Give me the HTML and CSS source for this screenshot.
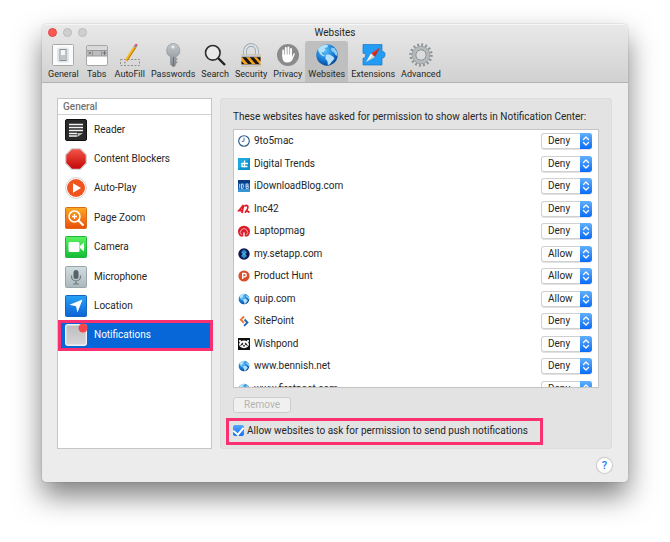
FILE: index.html
```html
<!DOCTYPE html>
<html lang="en">
<head>
    <meta charset="UTF-8">
    <meta name="viewport" content="width=device-width, initial-scale=1.0">
    <title>Websites</title>
    <link rel="stylesheet" href="styles.css">
</head>
<body>
    <!-- Shared shapes -->
    <svg class="defs" aria-hidden="true">
        <defs>
            <radialGradient id="sea" cx=".4" cy=".3" r=".75">
                <stop offset="0" stop-color="#5cc4fa"/>
                <stop offset=".6" stop-color="#1478d4"/>
                <stop offset="1" stop-color="#083f8c"/>
            </radialGradient>
            <linearGradient id="metal" x1="0" y1="0" x2="0" y2="1">
                <stop offset="0" stop-color="#c3c9cd"/>
                <stop offset="1" stop-color="#82898e"/>
            </linearGradient>
            <linearGradient id="red" x1="0" y1="0" x2="0" y2="1">
                <stop offset="0" stop-color="#f4564a"/>
                <stop offset="1" stop-color="#c40505"/>
            </linearGradient>
            <linearGradient id="orange" x1="0" y1="0" x2="0" y2="1">
                <stop offset="0" stop-color="#fbab22"/>
                <stop offset="1" stop-color="#ea4c0c"/>
            </linearGradient>
            <linearGradient id="green" x1="0" y1="0" x2="0" y2="1">
                <stop offset="0" stop-color="#5df25f"/>
                <stop offset="1" stop-color="#12bd35"/>
            </linearGradient>
            <linearGradient id="blue" x1="0" y1="0" x2="0" y2="1">
                <stop offset="0" stop-color="#27a3f8"/>
                <stop offset="1" stop-color="#0e62d6"/>
            </linearGradient>
            <linearGradient id="silver" x1="0" y1="0" x2="0" y2="1">
                <stop offset="0" stop-color="#d2dde0"/>
                <stop offset="1" stop-color="#aab8bd"/>
            </linearGradient>
            <linearGradient id="grey" x1="0" y1="0" x2="0" y2="1">
                <stop offset="0" stop-color="#bdbdbf"/>
                <stop offset="1" stop-color="#d6d6d8"/>
            </linearGradient>
        </defs>
        <symbol id="globe" viewBox="0 0 24 24">
            <circle cx="12" cy="12" r="10.7" fill="url(#sea)"/>
            <path d="M3 6C5 3 8 1.600 11 1.400L13.500 2.500 12 4.500 9.500 5 10.500 7 8.500 9 6.500 9.500 7.500 11.500 10 12.500 8.500 13.500 5.500 11.500 3.500 8.500Z" fill="#b5e2f9"/>
            <path d="M11 11.500L14.500 11.500 18 13.500 19.500 15.500 17 18.500 14.500 21.500 12.800 22 12.500 18.500 10.300 15.500Z" fill="#b5e2f9"/>
            <path d="M16 4.500L19.500 5.200 22 9 22.500 13 20.500 12 19 9.500 16.500 8Z" fill="#8fcff5"/>
        </symbol>
        <symbol id="arrows" viewBox="0 0 12 16">
            <path d="M3.500 6.500L6 4 8.500 6.500M3.500 9.500L6 12 8.500 9.500" fill="none" stroke="#fff" stroke-width="1.300" stroke-linecap="round" stroke-linejoin="round"/>
        </symbol>
    </svg>

    <div class="window">
        <header class="header">
            <div class="titlebar">
                <div class="lights">
                    <button class="light close" aria-label="Close"></button>
                    <button class="light" aria-label="Minimize" disabled></button>
                    <button class="light" aria-label="Zoom" disabled></button>
                </div>
                <h1>Websites</h1>
            </div>
            <nav class="toolbar">
                <button class="tool">
                    <svg viewBox="0 0 24 24"><rect x="1.500" y="1.500" width="21" height="21" rx="1" fill="#fbfbfb" stroke="#a9a9a9"/><rect x="6" y="4.500" width="12" height="15" rx="2.500" fill="#e2e5e7"/><rect x="9" y="6.500" width="6" height="11" fill="#f5f5f5" stroke="#8b8f92"/><path d="M10 12h4v5h-4z" fill="#c3c6c8"/></svg>
                    General
                </button>
                <button class="tool">
                    <svg viewBox="0 0 24 24"><rect x="1.500" y="2.500" width="21" height="20" rx="1.500" fill="#fff" stroke="#a6a6a6"/><path d="M2 3h20v4H2z" fill="#d9d9d9"/><path d="M2 7h20v6H2z" fill="#bcbcbe"/><path d="M2 7.500h20M2 13h20M7.500 8v5M16.500 8v5" stroke="#99999b"/><path d="M3.500 8.800l2.500 2.500M6 8.800l-2.500 2.500M19.500 8v4M17.500 10h4" stroke="#626265" stroke-width=".8"/></svg>
                    Tabs
                </button>
                <button class="tool">
                    <svg viewBox="0 0 24 24"><path d="M2.500 16.500h19v6h-19z" fill="none" stroke="#909090" stroke-dasharray="2 1.500"/><path d="M6.500 20.500L7.300 16.500 9.500 18Z" fill="#e9c79d"/><path d="M7.300 16.500L15.500 3.500 18 5 9.500 18Z" fill="#f7b614"/><path d="M8.700 17.500L17.200 4.600 18 5 9.500 18Z" fill="#bb790b"/><path d="M15.500 3.500L16.500 2 19 3.500 18 5Z" fill="#8e8994"/><path d="M16.500 2Q18 .2 19.200 1.200 20.200 2 19 3.500Z" fill="#dd5173"/><path d="M6.500 20.500L6.700 19 7.600 19.600Z" fill="#222"/></svg>
                    AutoFill
                </button>
                <button class="tool">
                    <svg viewBox="0 0 24 24"><path d="M12 .5a7 7 0 0 1 3 13.200V21l-1.500 2.500h-1.800L9.500 21.500v-7.800A7 7 0 0 1 12 .5z" fill="url(#metal)" stroke="#858b90" stroke-width=".6"/><path d="M12.500 14v9" stroke="#656d72" stroke-width="1"/><path d="M15 15.500h1.500v1.500H15zM15 18.500h1.500V20H15z" fill="#8f979b"/><circle cx="12" cy="4" r="1.500" fill="#eef1f2"/></svg>
                    Passwords
                </button>
                <button class="tool">
                    <svg viewBox="0 0 24 24"><circle cx="9.800" cy="9.800" r="7.300" fill="#f1f1f1" fill-opacity=".6" stroke="#2e2e2e" stroke-width="1.600"/><path d="M15 15l7 7" stroke="#202020" stroke-width="2.400"/></svg>
                    Search
                </button>
                <button class="tool">
                    <svg viewBox="0 0 24 24"><path d="M6 13V8a6 6 0 0 1 12 0v5" fill="none" stroke="#8795a3" stroke-width="3.400"/><path d="M6 13V8a6 6 0 0 1 12 0v5" fill="none" stroke="#dce3e9" stroke-width="2.200"/><rect x="2.500" y="11.500" width="19" height="12" fill="#f7a21c"/><path d="M3 14h4l6 7H9zM10.500 14h4l6 7h-4zM17.500 14h4v4.500zM2.500 18l2.800 3H2.500z" fill="#191614"/><path d="M2.500 11.500h19v2.500h-19zM2.500 21.500h19v2h-19z" fill="#c5ced8"/><path d="M2.500 14h19M2.500 21.500h19" stroke="#70767b" stroke-width=".6"/></svg>
                    Security
                </button>
                <button class="tool">
                    <svg viewBox="0 0 24 24"><circle cx="12" cy="12" r="11" fill="#8b8b8b"/><path d="M7.200 13V7.500M9.800 12V5M12.400 12V4.500M15 12V6" stroke="#fff" stroke-width="1.900" stroke-linecap="round"/><path d="M6.300 11.500h9.600v2.700L17.500 10.500Q18.800 9.800 18.900 11L16.500 16.500Q15 19.500 11.500 19.500 6.300 19.500 6.300 14z" fill="#fff"/></svg>
                    Privacy
                </button>
                <button class="tool active">
                    <svg><use href="#globe"/></svg>
                    Websites
                </button>
                <button class="tool">
                    <svg viewBox="0 0 24 24"><path d="M2 1.500h19v7.300c1.500-1 3.500.8 3 3.200-.2 2.500-1.700 3.500-3 2.700V22H2v-7c3 1.200 3.700-5.600 0-4.700z" fill="#239df4" stroke="#1576ca" stroke-width=".7"/><path d="M19 4.500L10 10.500l4 3.500z" fill="#ec3325"/><path d="M5 19L10 10.500l4 3.500z" fill="#fff"/><path d="M5 19l14-14.500L14 14z" fill="#000" fill-opacity=".16"/></svg>
                    Extensions
                </button>
                <button class="tool">
                    <svg viewBox="0 0 24 24"><circle cx="12" cy="12" r="10.300" fill="none" stroke="#8c9194" stroke-width="2.800" stroke-dasharray="1.800 2.245"/><circle cx="12" cy="12" r="7.200" fill="none" stroke="#b5babd" stroke-width="3.400"/><circle cx="12" cy="12" r="8.900" fill="none" stroke="#8f9598" stroke-width=".7"/><circle cx="12" cy="12" r="5.200" fill="#dcdcdc" stroke="#868c90" stroke-width="1"/></svg>
                    Advanced
                </button>
            </nav>
        </header>

        <main class="content">
            <aside class="sidebar">
                <h2>General</h2>
                <ul class="categories">
                    <li><a href="#">
                        <svg viewBox="0 0 22 22"><rect x=".5" y=".5" width="21" height="21" rx="1.500" fill="#292929" stroke="#101010"/><path d="M4 5.500h14M4 8.500h14M4 11.500h14M4 14.500h8M4 17h8" stroke="#f3f3f3" stroke-width="1.600"/><path d="M12.500 18v-4H18z" fill="#bbb"/></svg>
                        Reader</a></li>
                    <li><a href="#">
                        <svg viewBox="0 0 22 22"><path d="M6.800.7h8.400l6.100 6.100v8.400l-6.100 6.100H6.800L.7 15.200V6.800z" fill="url(#red)" stroke="#d4d4d4" stroke-width="1.200"/></svg>
                        Content Blockers</a></li>
                    <li><a href="#">
                        <svg viewBox="0 0 22 22"><circle cx="11" cy="11" r="10.400" fill="#fff" stroke="#cbcbcb" stroke-width=".9"/><circle cx="11" cy="11" r="9" fill="#f0551f"/><path d="M8 6.300l8 4.700-8 4.700z" fill="#fff"/></svg>
                        Auto-Play</a></li>
                    <li><a href="#">
                        <svg viewBox="0 0 22 22"><rect x=".5" y=".5" width="21" height="21" rx="1" fill="url(#orange)" stroke="#dc6d13"/><circle cx="9.500" cy="9.500" r="5.500" fill="none" stroke="#fff" stroke-width="1.500"/><path d="M7 9.500h5M9.500 7v5" stroke="#fff" stroke-width="1.300"/><path d="M13.500 13.500l5 5" stroke="#fff" stroke-width="2.200"/></svg>
                        Page Zoom</a></li>
                    <li><a href="#">
                        <svg viewBox="0 0 22 22"><rect x=".5" y=".5" width="21" height="21" rx="1" fill="url(#green)" stroke="#20b63c"/><rect x="3.500" y="6" width="11" height="10" rx="1.500" fill="#fff"/><path d="M15 10l4-3.500v9L15 12z" fill="#fff"/></svg>
                        Camera</a></li>
                    <li><a href="#">
                        <svg viewBox="0 0 22 22"><rect x=".5" y=".5" width="21" height="21" rx="1" fill="url(#silver)" stroke="#98a6ab"/><rect x="8.500" y="4" width="5" height="9" rx="2.500" fill="#596267"/><path d="M6.500 9.500v1a4.500 4.500 0 0 0 9 0v-1M11 15v2.500M8 18h6" fill="none" stroke="#6d777c" stroke-width="1.200"/></svg>
                        Microphone</a></li>
                    <li><a href="#">
                        <svg viewBox="0 0 22 22"><rect x=".5" y=".5" width="21" height="21" rx="1" fill="url(#blue)" stroke="#1466bd"/><path d="M17.500 4.500L12.500 17.500 11 11.200 4.500 9.700z" fill="#fff"/></svg>
                        Location</a></li>
                    <li class="selected"><a href="#" aria-current="page">
                        <svg viewBox="0 0 22 22"><rect x=".7" y=".7" width="20.600" height="20.600" rx="2" fill="url(#grey)" stroke="#f1f1f1" stroke-width="1.400"/><circle cx="18" cy="4" r="4.500" fill="#f8454a"/></svg>
                        Notifications</a></li>
                </ul>
            </aside>

            <section class="panel">
                <p class="intro">These websites have asked for permission to show alerts in Notification Center:</p>
                <div class="list">
                    <table class="sites">
                        <tbody>
                            <tr>
                                <td><svg viewBox="0 0 12 12"><circle cx="6" cy="6" r="5.300" fill="#fff" stroke="#245383" stroke-width="1.100"/><path d="M6 2.700V6.300H3.700" fill="none" stroke="#245383" stroke-width=".8"/></svg><label for="s1">9to5mac</label></td>
                                <td><span class="popup"><select id="s1"><option>Deny</option><option>Allow</option></select><svg><use href="#arrows"/></svg></span></td>
                            </tr>
                            <tr>
                                <td><svg viewBox="0 0 12 12"><path d="M0 0h12v12H0z" fill="#0c91cf"/><path d="M0 0h12L0 12z" fill="#1ca9df"/><path d="M6.500 2.500v7M3.500 5.500h6.500M4 5v3.500h5.500" fill="none" stroke="#fff" stroke-width="1.300"/></svg><label for="s2">Digital Trends</label></td>
                                <td><span class="popup"><select id="s2"><option>Deny</option><option>Allow</option></select><svg><use href="#arrows"/></svg></span></td>
                            </tr>
                            <tr>
                                <td><svg viewBox="0 0 12 12"><path d="M0 0h12v12H0z" fill="#1656a5"/><path d="M0 0h12v3H0z" fill="#0b3b81"/><path d="M0 9h12v3H0z" fill="#3a94d0"/><path d="M1.700 4v4.500M3.500 4v4.500h1.300q1.500-2.200 0-4.500zM8 4v4.500h2.300V6.300H8h2V4z" fill="none" stroke="#c5e0f5" stroke-width=".9"/></svg><label for="s3">iDownloadBlog.com</label></td>
                                <td><span class="popup"><select id="s3"><option>Deny</option><option>Allow</option></select><svg><use href="#arrows"/></svg></span></td>
                            </tr>
                            <tr>
                                <td><svg viewBox="0 0 12 12"><path d="M5.500 2L1 7.500h4M5.500 2L4 10M6.500 3.500Q8 1.500 9.500 3T7 9.800M8.500 7.500l3 2" fill="none" stroke="#e21d29" stroke-width="1.800"/></svg><label for="s4">Inc42</label></td>
                                <td><span class="popup"><select id="s4"><option>Deny</option><option>Allow</option></select><svg><use href="#arrows"/></svg></span></td>
                            </tr>
                            <tr>
                                <td><svg viewBox="0 0 12 12"><path d="M2.500 11.500A6 6 0 1 1 9.500 11.500z" fill="#dc1e2b"/><path d="M3.600 10A3.600 3.600 0 1 1 8.400 10" fill="none" stroke="#fff" stroke-width=".6"/><path d="M5.300 7.500h1.400V12H5.300z" fill="#fff"/></svg><label for="s5">Laptopmag</label></td>
                                <td><span class="popup"><select id="s5"><option>Deny</option><option>Allow</option></select><svg><use href="#arrows"/></svg></span></td>
                            </tr>
                            <tr>
                                <td><svg viewBox="0 0 12 12"><circle cx="6" cy="6" r="5.700" fill="#111653"/><path d="M6 1.500L9 4 7.500 6 9 8 6 10.500 3 8 4.500 6 3 4z" fill="#278ec5"/><path d="M4.500 4.500l3 3M7.500 4.500l-3 3" stroke="#62c4e0" stroke-width=".7"/></svg><label for="s6">my.setapp.com</label></td>
                                <td><span class="popup"><select id="s6"><option>Allow</option><option>Deny</option></select><svg><use href="#arrows"/></svg></span></td>
                            </tr>
                            <tr>
                                <td><svg viewBox="0 0 12 12"><circle cx="6" cy="6" r="5.600" fill="#da4e2b"/><path d="M4.700 9V3.500h1.900a1.600 1.600 0 0 1 0 3.300H4.700" fill="none" stroke="#fff" stroke-width="1.300"/></svg><label for="s7">Product Hunt</label></td>
                                <td><span class="popup"><select id="s7"><option>Allow</option><option>Deny</option></select><svg><use href="#arrows"/></svg></span></td>
                            </tr>
                            <tr>
                                <td><svg><use href="#globe"/></svg><label for="s8">quip.com</label></td>
                                <td><span class="popup"><select id="s8"><option>Allow</option><option>Deny</option></select><svg><use href="#arrows"/></svg></span></td>
                            </tr>
                            <tr>
                                <td><svg viewBox="0 0 12 12"><path d="M6 1.500L2.800 4.700 6 7.800" fill="none" stroke="#f36f21" stroke-width="1.800"/><path d="M6.500 4.500L9.500 7.500 6 10.800" fill="none" stroke="#1d62b4" stroke-width="1.800"/></svg><label for="s9">SitePoint</label></td>
                                <td><span class="popup"><select id="s9"><option>Deny</option><option>Allow</option></select><svg><use href="#arrows"/></svg></span></td>
                            </tr>
                            <tr>
                                <td><svg viewBox="0 0 12 12"><path d="M0 0h12v12H0z" fill="#101010"/><ellipse cx="6" cy="6.300" rx="4.900" ry="3.900" fill="#fff"/><circle cx="2" cy="3" r="1.100" fill="#fff"/><circle cx="10" cy="3" r="1.100" fill="#fff"/><path d="M2.500 7.500L4.500 4.800 5 6.200zM9.500 7.500L7.500 4.800 7 6.200zM5.300 7.500h1.400L6 8.700z" fill="#101010" stroke="#101010" stroke-width=".6"/></svg><label for="s10">Wishpond</label></td>
                                <td><span class="popup"><select id="s10"><option>Deny</option><option>Allow</option></select><svg><use href="#arrows"/></svg></span></td>
                            </tr>
                            <tr>
                                <td><svg><use href="#globe"/></svg><label for="s11">www.bennish.net</label></td>
                                <td><span class="popup"><select id="s11"><option>Deny</option><option>Allow</option></select><svg><use href="#arrows"/></svg></span></td>
                            </tr>
                            <tr>
                                <td><svg><use href="#globe"/></svg><label for="s12">www.firstpost.com</label></td>
                                <td><span class="popup"><select id="s12"><option>Deny</option><option>Allow</option></select><svg><use href="#arrows"/></svg></span></td>
                            </tr>
                        </tbody>
                    </table>
                </div>
                <button class="remove" disabled>Remove</button>
                <label class="permission">
                    <input type="checkbox" checked>
                    Allow websites to ask for permission to send push notifications
                </label>
            </section>
        </main>

        <footer class="footer">
            <button class="help" aria-label="Help">?</button>
        </footer>
    </div>
</body>
</html>
```

FILE: styles.css
```css
* {
    box-sizing: border-box;
}

body {
    margin: 0;
    padding: 24px 42px 60px;
    background-color: #ffffff;
    color: #262626;
    font-family: Roboto, "Liberation Sans", sans-serif;
    font-size: 10px;
    line-height: 14px;
}

button, select, input {
    font: inherit;
    color: inherit;
    margin: 0;
    padding: 0;
    border: none;
    background: none;
}

h1, h2, p, ul {
    margin: 0;
    padding: 0;
    font-size: 10px;
    font-weight: 400;
}

svg {
    display: block;
    flex: none;
    overflow: visible;
}

.defs {
    position: absolute;
    width: 0;
    height: 0;
}

.window {
    background-color: #ececec;
    border-radius: 5px 5px 4px 4px;
    box-shadow: 0 0 1px rgba(0, 0, 0, 0.5), 0 14px 28px rgba(0, 0, 0, 0.5);
}

/* Title bar and toolbar */
.header {
    background: linear-gradient(#e9e9e9, #d1d1d1);
    border-bottom: 1px solid #b3b3b3;
    border-radius: 5px 5px 0 0;
    box-shadow: inset 0 1px 0 #f6f6f6;
}

.titlebar {
    display: grid;
    grid-template-columns: 1fr auto 1fr;
    align-items: center;
    height: 17px;
    padding: 0 6px;
}

.lights {
    display: flex;
    gap: 6px;
}

.light {
    width: 9px;
    height: 9px;
    border-radius: 50%;
    background-color: #cfcfcf;
    border: 1px solid #bcbcbc;
}

.light.close {
    background-color: #fc5753;
    border-color: #df4744;
}

.toolbar {
    display: flex;
    height: 41px;
    padding: 0 3px;
}

.tool {
    display: flex;
    flex-direction: column;
    align-items: center;
    min-width: 30px;
    padding: 2px 3px 0;
    font-size: 9px;
    line-height: 14px;
}

.tool svg {
    width: 24px;
    height: 24px;
}

.tool.active {
    background-color: #bfbfbf;
    border-radius: 3px 3px 0 0;
}

/* Content */
.content {
    display: grid;
    grid-template-columns: 155px minmax(0, 1fr);
    gap: 8px;
    padding: 15px 16px 0 15px;
}

.sidebar {
    background-color: #ffffff;
    border: 1px solid #c6c6c6;
}

.sidebar h2 {
    height: 16px;
    padding-left: 5px;
    border-bottom: 1px solid #d2d2d2;
    color: #747474;
    font-weight: 500;
    line-height: 15px;
}

.categories {
    display: flex;
    flex-direction: column;
    height: 235px;
    list-style: none;
}

.categories li {
    display: flex;
    flex: 1;
}

.categories a {
    display: flex;
    flex: 1;
    align-items: center;
    gap: 7px;
    padding-left: 7px;
    color: inherit;
    text-decoration: none;
}

.categories svg {
    width: 22px;
    height: 22px;
}

.categories .selected {
    position: relative;
    background-color: #0766d8;
    color: #ffffff;
}

.selected::after {
    content: "";
    position: absolute;
    inset: -1px -2px -1px 0;
    border: 3px solid #fb3070;
}

.panel {
    display: flex;
    flex-direction: column;
    align-items: flex-start;
    padding: 11px 12px 3px;
    background-color: #e3e3e3;
    border: 1px solid #dcdcdc;
    border-radius: 3px;
}

.intro {
    margin-bottom: 5px;
    white-space: nowrap;
}

.list {
    align-self: stretch;
    height: 259px;
    overflow: hidden;
    background-color: #ffffff;
    border: 1px solid #c4c4c4;
}

.sites {
    width: 100%;
    height: 270px;
    border-collapse: collapse;
}

.sites td {
    padding: 0 0 0 4px;
    vertical-align: middle;
}

.sites td:first-child > svg {
    float: left;
    width: 12px;
    height: 12px;
    margin: 1px 4px 0 0;
}

.sites td:last-child {
    width: 61px;
}

.popup {
    display: flex;
    width: 51px;
    height: 16px;
    overflow: hidden;
    background-color: #ffffff;
    border-radius: 3px;
    box-shadow: inset 0 0 0 1px #d0d0d0, 0 1px 0 #e2e2e2;
}

.popup select {
    appearance: none;
    flex: 1;
    min-width: 0;
    padding-left: 7px;
}

.popup svg {
    width: 12px;
    height: 16px;
    margin-left: -12px;
    background: linear-gradient(#62b0fb, #0a6cf8);
    pointer-events: none;
}

.remove {
    width: 58px;
    height: 16px;
    margin: 9px 0 5px;
    background-color: #f0f0f0;
    border: 1px solid #cdcdcd;
    border-radius: 3px;
    color: #b3b3b3;
    line-height: 14px;
}

.permission {
    display: flex;
    align-items: center;
    gap: 3px;
    height: 27px;
    margin-left: -7px;
    padding: 0 12px 2px 4px;
    border: 3px solid #fb3070;
    white-space: nowrap;
}

.permission input {
    appearance: none;
    display: grid;
    place-items: center;
    width: 11px;
    height: 11px;
    border-radius: 2px;
    background: #d5d5d5;
}

.permission input:checked {
    background: linear-gradient(#55a8fb, #1272f5);
}

.permission input:checked::before {
    content: "";
    width: 5px;
    height: 8px;
    margin-bottom: 2px;
    border: solid #ffffff;
    border-width: 0 2px 2px 0;
    transform: rotate(40deg);
}

.footer {
    display: flex;
    justify-content: flex-end;
    padding: 9px 16px 9px;
}

.help {
    width: 15px;
    height: 15px;
    border-radius: 50%;
    background-color: #ffffff;
    box-shadow: 0 0 1px 1px #c8c8c8;
    color: #1a7cf5;
    font-size: 11px;
    font-weight: 500;
}
```
